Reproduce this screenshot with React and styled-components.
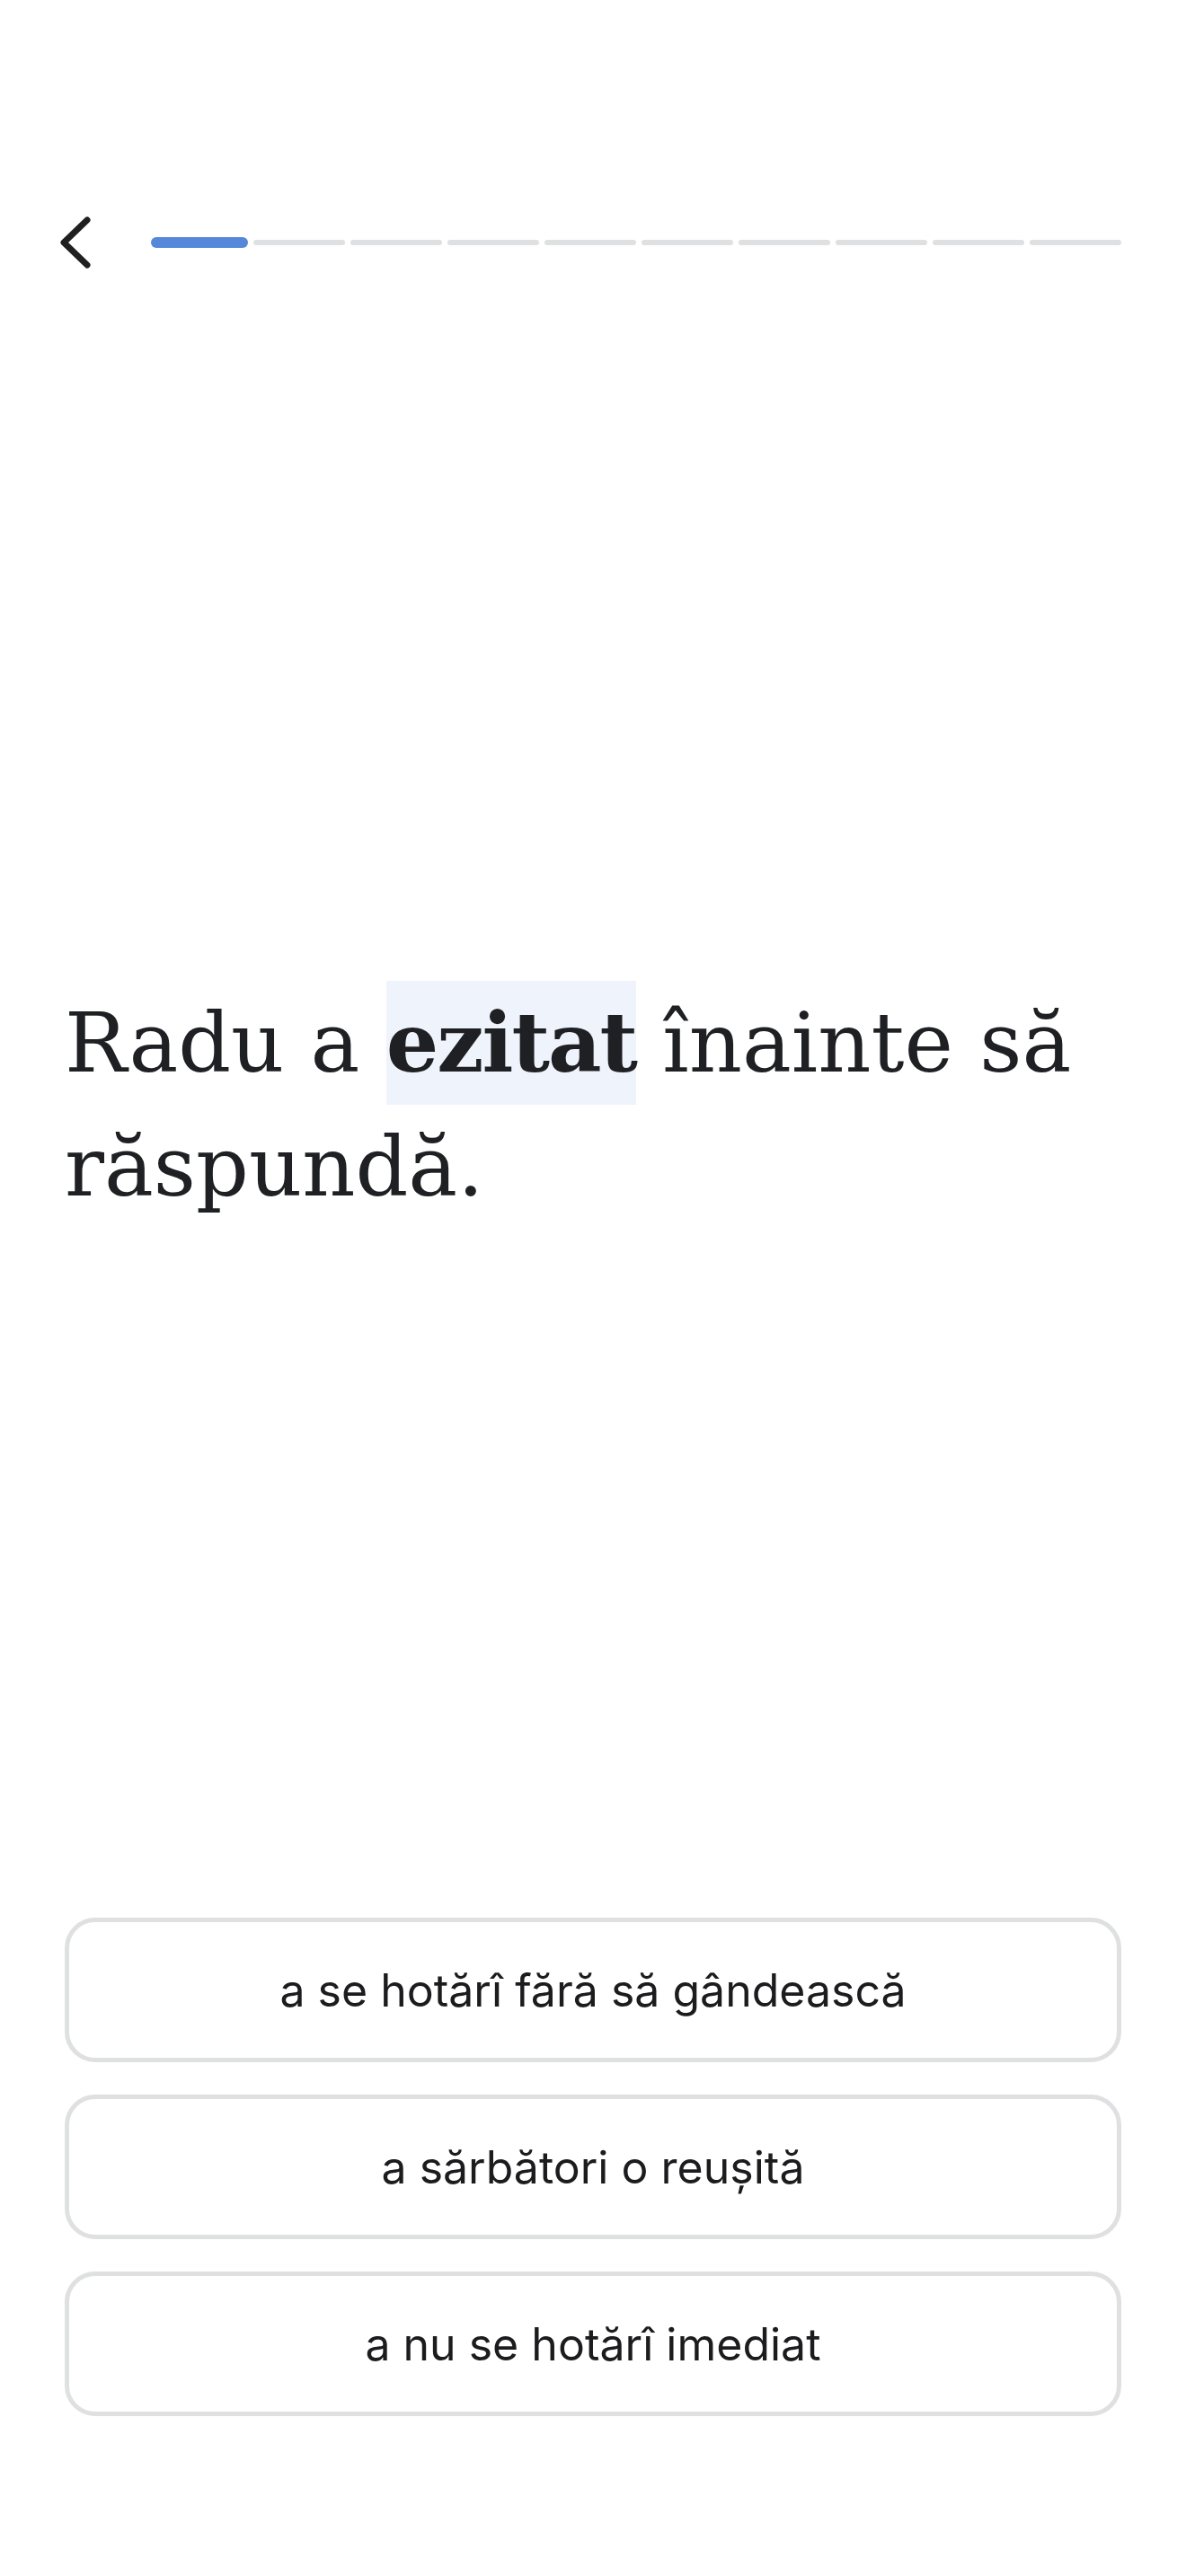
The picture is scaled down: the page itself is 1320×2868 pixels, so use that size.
import React from "react";
import styled, { createGlobalStyle } from "styled-components";

const GlobalStyle = createGlobalStyle`
  html, body {
    margin: 0;
    padding: 0;
    background: #ffffff;
  }

  * {
    box-sizing: border-box;
  }
`;

const Page = styled.div`
  height: 100vh;
  display: flex;
  flex-direction: column;
  padding: 240px 72px 178px;
  background: #ffffff;
`;

const Header = styled.header`
  height: 60px;
  display: flex;
  align-items: center;
  gap: 64px;
`;

const BackButton = styled.button`
  margin-left: -8px;
  width: 40px;
  height: 60px;
  padding: 0;
  border: none;
  background: none;
  cursor: pointer;
  display: flex;

  svg {
    display: block;
  }
`;

const Progress = styled.div`
  flex: 1;
  display: flex;
  align-items: center;
  gap: 6px;
`;

const Segment = styled.div`
  height: ${(p) => (p.$active ? "12px" : "6px")};
  border-radius: 6px;
  background: ${(p) => (p.$active ? "#5588d9" : "#dfe0e2")};
  ${(p) => (p.$active ? "width: 108px; flex: none;" : "flex: 1;")}
`;

const Main = styled.main`
  flex: 1;
  display: flex;
  align-items: center;
  padding-top: 26px;
`;

const Sentence = styled.p`
  margin: 0;
  font-family: "DejaVu Serif", "Liberation Serif", serif;
  font-size: 92px;
  line-height: 138px;
  color: #1f2023;
`;

const Highlight = styled.span`
  display: inline-block;
  font-weight: 700;
  letter-spacing: -2px;
  background: #eef3fc;
`;

const Options = styled.div`
  display: flex;
  flex-direction: column;
  gap: 36px;
`;

const Option = styled.button`
  height: 161px;
  width: 100%;
  border: 5px solid #dfe0e2;
  border-radius: 34px;
  background: #ffffff;
  font-family: Inter, "Noto Sans", sans-serif;
  font-size: 50px;
  color: #1c1c1e;
  cursor: pointer;
`;

const choices = [
  "a se hotărî fără să gândească",
  "a sărbători o reușită",
  "a nu se hotărî imediat",
];

export default function App() {
  return (
    <>
      <GlobalStyle />
      <Page>
        <Header>
          <BackButton aria-label="Înapoi">
            <svg width="40" height="60" viewBox="0 0 40 60" fill="none">
              <polyline
                points="33,5 7,30 33,55"
                stroke="#1f1f1f"
                strokeWidth="7"
                strokeLinecap="round"
                strokeLinejoin="round"
              />
            </svg>
          </BackButton>
          <Progress>
            {Array.from({ length: 10 }).map((_, i) => (
              <Segment key={i} $active={i === 0} />
            ))}
          </Progress>
        </Header>
        <Main>
          <Sentence>
            Radu a <Highlight>ezitat</Highlight> înainte să răspundă.
          </Sentence>
        </Main>
        <Options>
          {choices.map((c) => (
            <Option key={c}>{c}</Option>
          ))}
        </Options>
      </Page>
    </>
  );
}
